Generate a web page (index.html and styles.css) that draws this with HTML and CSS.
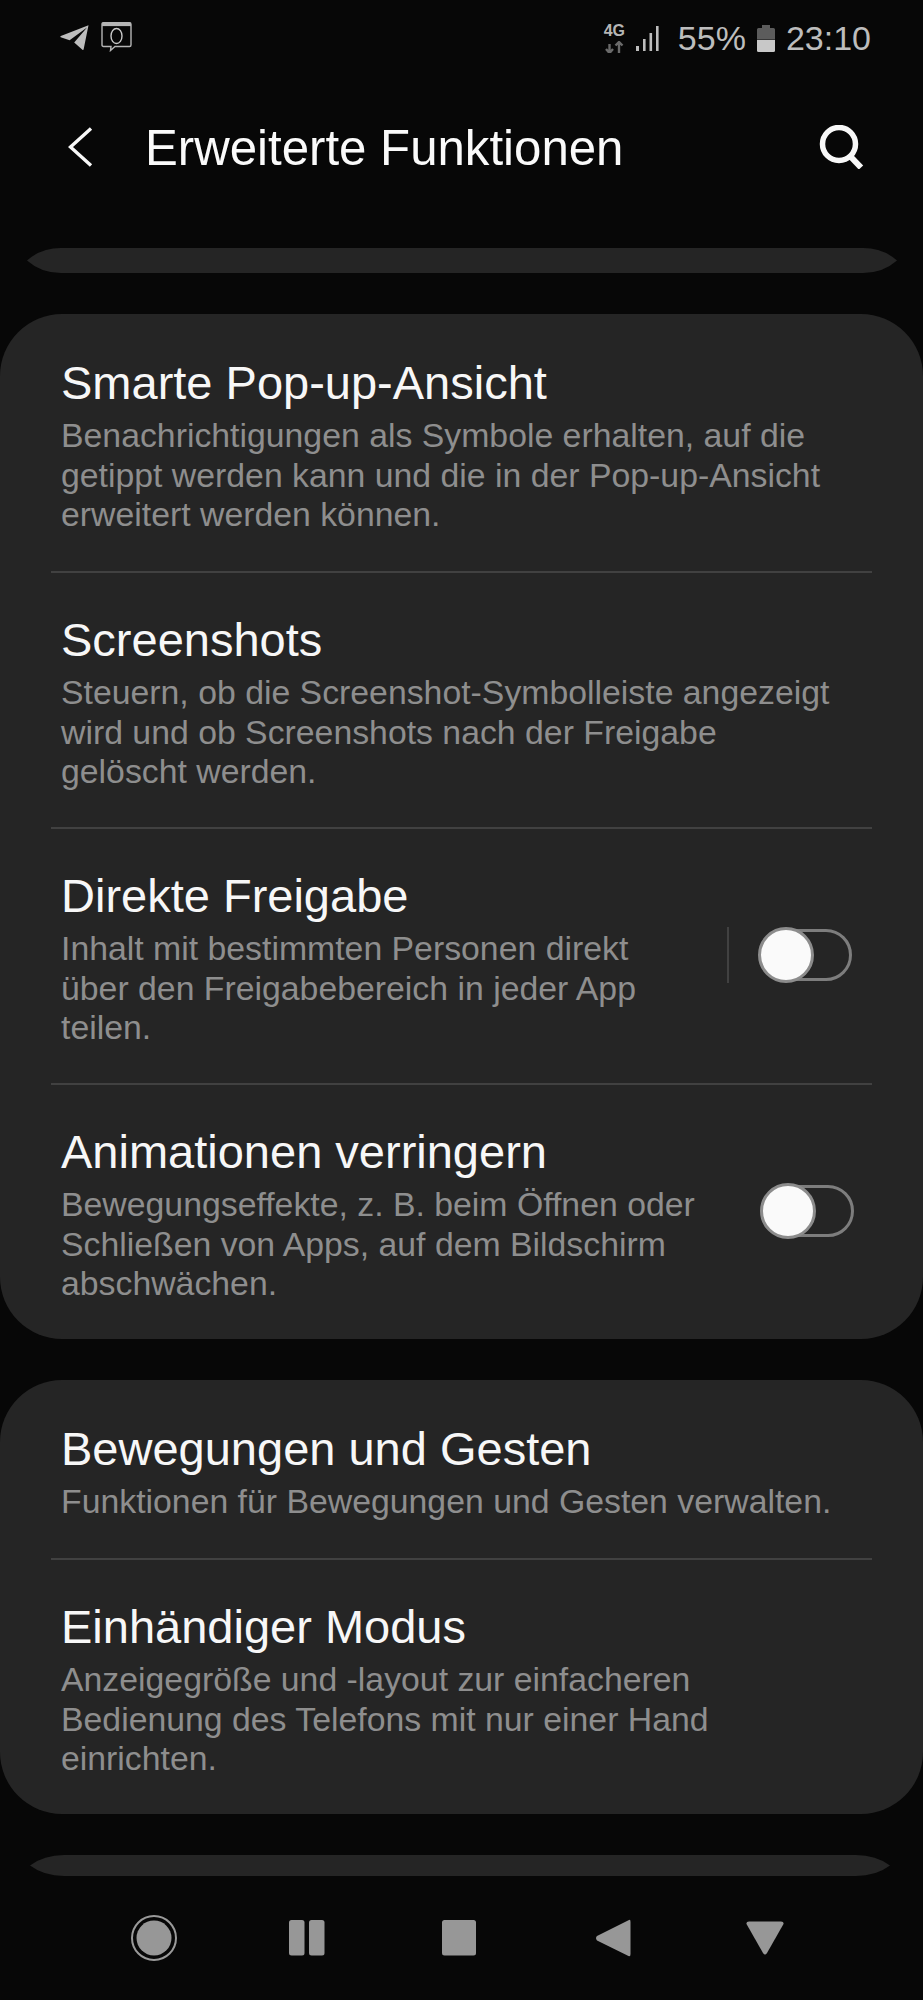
FILE: index.html
```html
<!DOCTYPE html>
<html lang="de">
<head>
<meta charset="utf-8">
<title>Erweiterte Funktionen</title>
<link rel="stylesheet" href="styles.css">
</head>
<body>
<div class="screen">
  <div class="status">
    <div class="status-left">
      <svg class="ic-tg" viewBox="0 0 29 25"><path d="M28.5 0.3 L23.6 24.6 Q23.2 25.2 22.4 24.7 L14.2 17.6 L27 2.6 L9.6 15.2 L0.7 12.2 Q0 11.6 0.8 11 Z" fill="#bdbdbd"/></svg>
      <svg class="ic-box" viewBox="0 0 31 30"><path d="M2.5 0.7 H28.5 Q30 0.7 30 2.2 V23 Q30 24.5 28.5 24.5 H14 L9.5 28.5 L10 24.5 H2.5 Q1 24.5 1 23 V2.2 Q1 0.7 2.5 0.7 Z" fill="none" stroke="#b5b5b5" stroke-width="1.4"/><rect x="1" y="0.7" width="29" height="3.4" fill="#b5b5b5"/><ellipse cx="15.5" cy="14" rx="5.5" ry="7.5" fill="none" stroke="#c8c8c8" stroke-width="1.4"/></svg>
    </div>
    <div class="status-right">
      <div class="net">
        <span class="net-label">4G</span>
        <svg class="ic-arrows" viewBox="0 0 19 12"><path d="M4.5 12 V3 M1 8 L4.5 12 L8 8 M14 12 V1 M10.5 4.5 L14 1 L17.5 4.5" fill="none" stroke="#6a6a6a" stroke-width="2.4"/></svg>
      </div>
      <svg class="ic-signal" viewBox="0 0 23 25"><rect x="0" y="20" width="3" height="5" fill="#bdbdbd"/><rect x="7" y="13" width="2.6" height="12" fill="#bdbdbd"/><rect x="13.5" y="7" width="2.6" height="18" fill="#bdbdbd"/><rect x="20" y="0" width="2.6" height="25" fill="#bdbdbd"/></svg>
      <span class="status-text pct">55%</span>
      <svg class="ic-batt" viewBox="0 0 18 27"><path d="M5 0 H13 V3 H16.5 Q18 3 18 4.5 V14 H0 V4.5 Q0 3 1.5 3 H5 Z" fill="#5c5c5c"/><path d="M0 14.7 H18 V25.5 Q18 27 16.5 27 H1.5 Q0 27 0 25.5 Z" fill="#c8c8c8"/></svg>
      <span class="status-text">23:10</span>
    </div>
  </div>

  <header class="appbar">
    <svg class="ic-back" viewBox="0 0 25 40"><path d="M23 1.5 L2.5 20 L23 38.5" fill="none" stroke="#f8f8f8" stroke-width="3.4"/></svg>
    <h1 class="appbar-title">Erweiterte Funktionen</h1>
    <svg class="ic-search" viewBox="0 0 46 44"><circle cx="21" cy="19" r="16.5" fill="none" stroke="#f8f8f8" stroke-width="5.5"/><path d="M32 31 L43 42.5" fill="none" stroke="#f8f8f8" stroke-width="6"/></svg>
  </header>

  <svg class="sliver sliver-top" viewBox="0 0 870 25" preserveAspectRatio="none"><path d="M0 12.5 Q14 0 34 0 H836 Q856 0 870 12.5 Q856 25 836 25 H34 Q14 25 0 12.5 Z" fill="#252525"/></svg>

  <section class="card">
    <div class="row">
      <div class="row-text">
        <h2 class="row-title">Smarte Pop-up-Ansicht</h2>
        <p class="row-desc">Benachrichtigungen als Symbole erhalten, auf die getippt werden kann und die in der Pop-up-Ansicht erweitert werden können.</p>
      </div>
    </div>
    <div class="row">
      <div class="row-text">
        <h2 class="row-title">Screenshots</h2>
        <p class="row-desc">Steuern, ob die Screenshot-Symbolleiste angezeigt wird und ob Screenshots nach der Freigabe gelöscht werden.</p>
      </div>
    </div>
    <div class="row">
      <div class="row-text narrow">
        <h2 class="row-title">Direkte Freigabe</h2>
        <p class="row-desc">Inhalt mit bestimmten Personen direkt über den Freigabebereich in jeder App teilen.</p>
      </div>
      <span class="vline"></span>
      <span class="toggle"><span class="thumb"></span></span>
    </div>
    <div class="row">
      <div class="row-text">
        <h2 class="row-title">Animationen verringern</h2>
        <p class="row-desc">Bewegungseffekte, z. B. beim Öffnen oder Schließen von Apps, auf dem Bildschirm abschwächen.</p>
      </div>
      <span class="toggle"><span class="thumb"></span></span>
    </div>
  </section>

  <section class="card">
    <div class="row">
      <div class="row-text">
        <h2 class="row-title">Bewegungen und Gesten</h2>
        <p class="row-desc">Funktionen für Bewegungen und Gesten verwalten.</p>
      </div>
    </div>
    <div class="row">
      <div class="row-text">
        <h2 class="row-title">Einhändiger Modus</h2>
        <p class="row-desc">Anzeigegröße und -layout zur einfacheren Bedienung des Telefons mit nur einer Hand einrichten.</p>
      </div>
    </div>
  </section>

  <svg class="sliver sliver-bottom" viewBox="0 0 860 21" preserveAspectRatio="none"><path d="M0 10.5 Q14 0 34 0 H826 Q846 0 860 10.5 Q846 21 826 21 H34 Q14 21 0 10.5 Z" fill="#252525"/></svg>

  <nav class="navbar">
    <svg class="nav-ic" width="46" height="48" viewBox="0 0 46 48"><circle cx="23" cy="24" r="22" fill="none" stroke="#9a9a9a" stroke-width="2"/><circle cx="23" cy="24" r="17.5" fill="#979797"/></svg>
    <svg class="nav-ic nav-pause" width="36" height="36" viewBox="0 0 36 36"><rect x="0" y="0" width="15.5" height="35.5" rx="2.5" fill="#979797"/><rect x="20" y="0" width="15.5" height="35.5" rx="2.5" fill="#979797"/></svg>
    <svg class="nav-ic" width="36" height="36" viewBox="0 0 36 36"><rect x="1" y="0" width="34" height="35.5" rx="2.5" fill="#979797"/></svg>
    <svg class="nav-ic nav-left" width="36" height="38" viewBox="0 0 36 38"><path d="M34 1 Q35.5 0 35.5 3 V35 Q35.5 38 33.5 37 L2 21.5 Q0 19 2 17 Z" fill="#979797"/></svg>
    <svg class="nav-ic nav-down" width="38" height="34" viewBox="0 0 38 34"><path d="M3 0.5 H35 Q38 0.5 37.5 3 L21 32 Q19 35 17 32 L0.5 3 Q0 0.5 3 0.5 Z" fill="#979797"/></svg>
  </nav>
</div>
</body>
</html>
```
FILE: styles.css
```css
* { box-sizing: border-box; }
html, body { margin: 0; padding: 0; background: #070707; }
.screen {
  width: 923px;
  height: 2000px;
  overflow: hidden;
  display: flex;
  flex-direction: column;
  background: #070707;
  font-family: "Liberation Sans", Arial, sans-serif;
}
.status {
  height: 72px;
  flex: none;
  display: flex;
  justify-content: space-between;
  align-items: flex-start;
  padding: 22px 52px 0 60px;
}
.status-left { display: flex; gap: 12px; align-items: center; }
.ic-tg { width: 29px; height: 25px; }
.ic-box { width: 31px; height: 30px; }
.status-right { display: flex; align-items: center; height: 32px; }
.net { display: flex; flex-direction: column; align-items: center; width: 19px; margin-right: 12px; }
.net-label { font-size: 16px; line-height: 14px; font-weight: 700; color: #b5b5b5; }
.ic-arrows { width: 19px; height: 12px; margin-top: 3px; }
.ic-signal { width: 23px; height: 25px; margin-right: 19px; }
.status-text { font-size: 34px; line-height: 32px; color: #bdbdbd; }
.pct { margin-right: 11px; }
.ic-batt { width: 18px; height: 27px; margin-right: 11px; }
.appbar {
  height: 150px;
  flex: none;
  display: flex;
  align-items: center;
  padding-left: 68px;
  padding-right: 59px;
}
.ic-back { width: 25px; height: 40px; margin-right: 52px; }
.appbar-title { flex: 1; margin: 0; font-size: 49.2px; font-weight: 400; color: #fafafa; }
.ic-search { width: 46px; height: 44px; }
.sliver { display: block; flex: none; }
.sliver-top { width: 870px; height: 25px; margin: 26px 0 41px 27px; }
.sliver-bottom { width: 860px; height: 21px; margin: 41.5px 0 0 30px; }
.card { background: #252525; border-radius: 62px; flex: none; margin-bottom: 41.5px; padding: 0 51px; }
.card:last-of-type { margin-bottom: 0; }
.row {
  display: flex;
  align-items: center;
  padding: 41px 10px 35.5px;
  border-bottom: 2px solid #414141;
}
.row:first-child { padding-top: 43px; padding-bottom: 36.5px; }
.row:last-child { border-bottom: 0; padding-bottom: 35px; }
.row-text { flex: 1; min-width: 0; }
.row-text.narrow { flex: none; width: 590px; margin-right: 76px; }
.row-title { margin: 0 0 7px; font-size: 47px; line-height: 52px; font-weight: 400; color: #f7f7f7; }
.row-desc { margin: 0; max-width: 790px; font-size: 33.8px; line-height: 39.5px; color: #8e8e8e; }
.vline { width: 1.5px; height: 56px; background: #414141; flex: none; margin-right: 31px; margin-bottom: 8px; }
.toggle {
  position: relative;
  flex: none;
  width: 92px;
  height: 52px;
  border: 3px solid #7d7d7d;
  border-radius: 26px;
  margin-right: 8px;
  margin-bottom: 8px;
}
.thumb {
  position: absolute;
  left: -5px;
  top: -5px;
  width: 56px;
  height: 56px;
  border-radius: 50%;
  background: #fafafa;
  border: 3px solid #8c8c8c;
}
.navbar { flex: 1; display: flex; gap: 116px; align-items: center; padding-left: 131px; }
.nav-pause { margin-left: -4px; }
.nav-left { margin-left: 2px; }
.nav-down { margin-left: -1px; }
```
